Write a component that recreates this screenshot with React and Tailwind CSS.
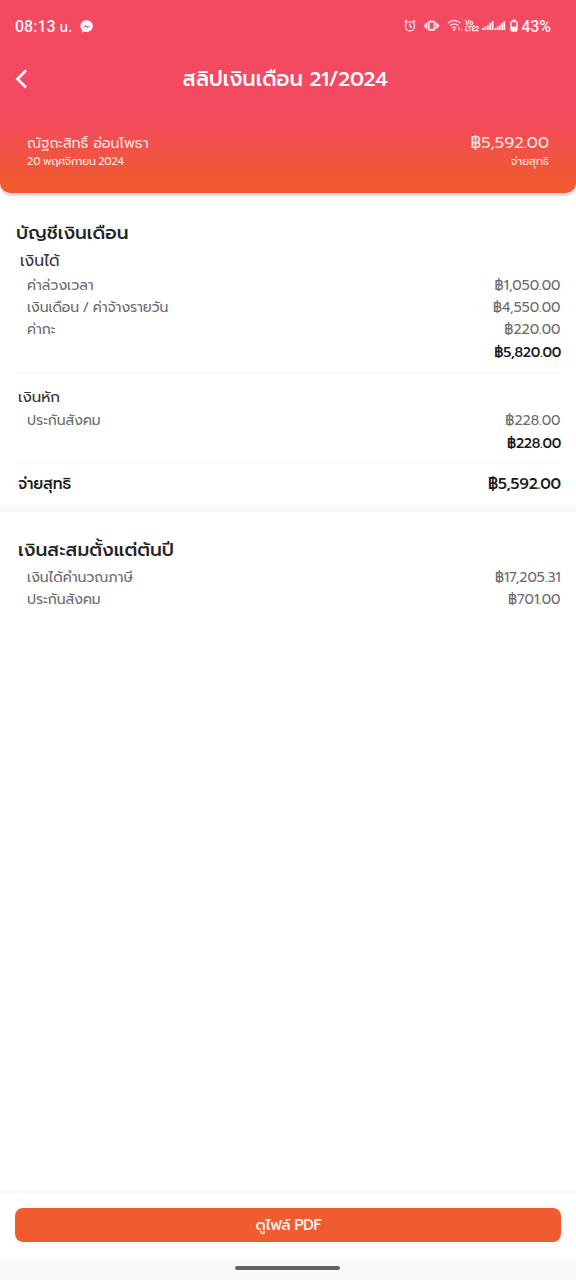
import React from 'react';

const Line = ({ label, amount, className = '', labelClass = '', amountClass = '' }) => (
  <div className={`flex items-center justify-between whitespace-nowrap ${className}`}>
    <span className={labelClass}>{label}</span>
    <span className={amountClass}>{amount}</span>
  </div>
);

const item = 'h-[22.4px] pl-3 pr-[0.5px] text-[14px] [word-spacing:-1.5px] text-[#6c6c6c]';
const total = 'h-[22.4px] text-[14px] tracking-[-0.25px] font-medium text-[#1c1c1c]';

function StatusIcons() {
  return (
    <svg className="h-[16px] w-[116px]" viewBox="403 18 116 16" fill="none" stroke="#ffd9df" strokeWidth="1.4">
      <circle cx="410" cy="26.2" r="4.6" />
      <path d="M410 23.5v3l2 1M404.7 22.2l2.300-2.200M415.300 22.200l-2.300-2.200" />
      <rect x="428.600" y="21.500" width="6" height="8.400" rx="2" strokeWidth="2.200" />
      <path d="M427 22v7.400l-3.500-3.700zM436.200 22v7.400l3.500-3.700z" fill="#ffd9df" stroke="none" />
      <path d="M448 23q6.200-5 12.400 0M450 25.600q4.200-3.300 8.400 0M452 28q2.200-1.700 4.400 0" strokeWidth="1.500" />
      <circle cx="454.200" cy="29.800" r="1.200" fill="#ffd9df" stroke="none" />
      <path d="M459 27v3.500M461.500 30.500v-2" strokeWidth="1" />
      <g fill="#ffd9df" stroke="#ffd9df" strokeWidth=".3" fontFamily="Roboto" fontWeight="700">
        <text x="465" y="25" fontSize="7">Vo</text>
        <text x="465" y="31" fontSize="7" textLength="14" lengthAdjust="spacingAndGlyphs">LTE2</text>
      </g>
      <path d="M483 30v-2M485.400 30v-3.500M487.800 30v-5M490.200 30v-7M492.600 30v-9M495.500 30v-2M497.800 30v-3.500M500 30v-5M502.200 30v-7M504.300 30v-9" stroke="#fff0f2" strokeWidth="1.800" />
      <rect x="511" y="21.500" width="6" height="9.600" rx="1" stroke="#fff0f2" />
      <path d="M512.500 19.500h3v2h-3zM511 26.500h6v4.500h-6z" fill="#fff0f2" stroke="none" />
    </svg>
  );
}

export default function App() {
  return (
    <div className="flex h-[1280px] w-[576px] flex-col overflow-hidden bg-white font-['Prompt','Kanit','Open_Sans','Noto_Sans_Thai',sans-serif]">
      <header className="h-[193px] shrink-0 rounded-b-[10px] bg-[linear-gradient(to_bottom,#f34961_0px,#f34961_116px,#f05a2f_184px)] text-white shadow-[0_3px_2px_rgba(0,0,0,0.14)]">
        <div className="flex h-[52px] items-center justify-between pl-[15px] pr-[25px] font-['Roboto','Noto_Sans_Thai',sans-serif] text-[16px] font-medium text-[#fff0f2]">
          <div className="flex items-center pt-px">
            <span className="w-[65px] whitespace-nowrap">08:13 <span className="text-[14px]">น.</span></span>
            <svg className="h-[13px] w-[13px]" viewBox="0 0 13 13">
              <path d="M6.500 0.200A6.200 5.900 0 0 0 2.200 10.300V12.400l1.900-.9A6.200 5.900 0 1 0 6.500 0.200Z" fill="#fff" />
              <path d="M2.700 7.800L5.500 5l2 1.600L10.300 5 7.500 8 5.500 6.400Z" fill="#f34961" />
            </svg>
          </div>
          <div className="flex items-center gap-[2px]">
            <StatusIcons />
            <span className="pt-px tracking-[-0.1px]">43%</span>
          </div>
        </div>
        <div className="grid h-[53px] grid-cols-[54px_1fr_60px] items-center">
          <svg className="ml-[14px] h-[22px] w-[14px]" viewBox="0 0 14 22" fill="none" stroke="#fff0f2" strokeWidth="2.800">
            <path d="M12 2.500L3.500 11l8.500 8.500" />
          </svg>
          <h1 className="whitespace-nowrap pt-[2px] text-center text-[21px] font-medium [word-spacing:-1px]">สลิปเงินเดือน <span className="text-[20.5px] tracking-[-0.3px]">21/2024</span></h1>
        </div>
        <div className="flex h-[66px] flex-col justify-center px-[27px] pt-[27px] text-[#ffe5df]">
          <Line className="h-[22px]" label="ณัฐถะสิทธิ์ อ่อนโพธา" amount="฿5,592.00" labelClass="text-[14px]" amountClass="text-[16.5px]" />
          <Line className="h-[18px]" label="20 พฤศจิกายน 2024" amount="จ่ายสุทธิ" labelClass="text-[11px] tracking-[-0.25px] [word-spacing:-1.2px]" amountClass="text-[11px]" />
        </div>
      </header>

      <main className="flex-1">
        <section className="px-[15px] pt-[27px]">
          <h2 className="flex h-[28px] items-center pl-px text-[18.5px] font-medium text-[#252525]">บัญชีเงินเดือน</h2>
          <h3 className="flex h-[26px] items-center pl-[5px] pt-px text-[15.5px] text-[#333]">เงินได้</h3>
          <Line className={item} label="ค่าล่วงเวลา" amount="฿1,050.00" />
          <Line className={item} label="เงินเดือน / ค่าจ้างรายวัน" amount="฿4,550.00" labelClass="tracking-[-0.08px]" />
          <Line className={item} label="ค่ากะ" amount="฿220.00" />
          <Line className={total} label="" amount="฿5,820.00" />
          <div className="mt-[8px] h-px bg-[#f7f7f7]" />
          <h3 className="mt-[12px] flex h-[25px] items-center pl-[3px] text-[15px] text-[#333]">เงินหัก</h3>
          <Line className={item} label="ประกันสังคม" amount="฿228.00" />
          <Line className={total} label="" amount="฿228.00" />
          <div className="mt-[8px] h-px bg-[#f7f7f7]" />
          <Line className="h-[42px] pl-[3px] pt-px text-[15.5px] font-medium text-[#1c1c1c]" label="จ่ายสุทธิ" amount="฿5,592.00" labelClass="tracking-[-0.2px]" amountClass="tracking-[-0.2px]" />
        </section>
        <div className="h-[7px] bg-[#f8f8f8]" />
        <section className="px-[15px] pt-[24px]">
          <h2 className="flex h-[30px] items-center pl-[3px] text-[18.6px] font-medium text-[#252525]">เงินสะสมตั้งแต่ต้นปี</h2>
          <Line className={item} label="เงินได้คำนวณภาษี" amount="฿17,205.31" />
          <Line className={item} label="ประกันสังคม" amount="฿701.00" />
        </section>
      </main>

      <footer className="shrink-0">
        <div className="h-[68px] border-t-[3px] border-[#f9f9f9] px-[15px] pt-[15px]">
          <button className="flex h-[34px] w-full items-center justify-center rounded-[8px] bg-[#f05c30] pl-px text-[15px] font-medium tracking-[-0.3px] text-[#ffefe5] [word-spacing:-1px]">ดูไฟล์ PDF</button>
        </div>
        <div className="flex h-[22px] justify-center bg-[#fafafa] pt-[8px]">
          <div className="mr-px h-[4px] w-[105px] rounded-full bg-[#656565]" />
        </div>
      </footer>
    </div>
  );
}
